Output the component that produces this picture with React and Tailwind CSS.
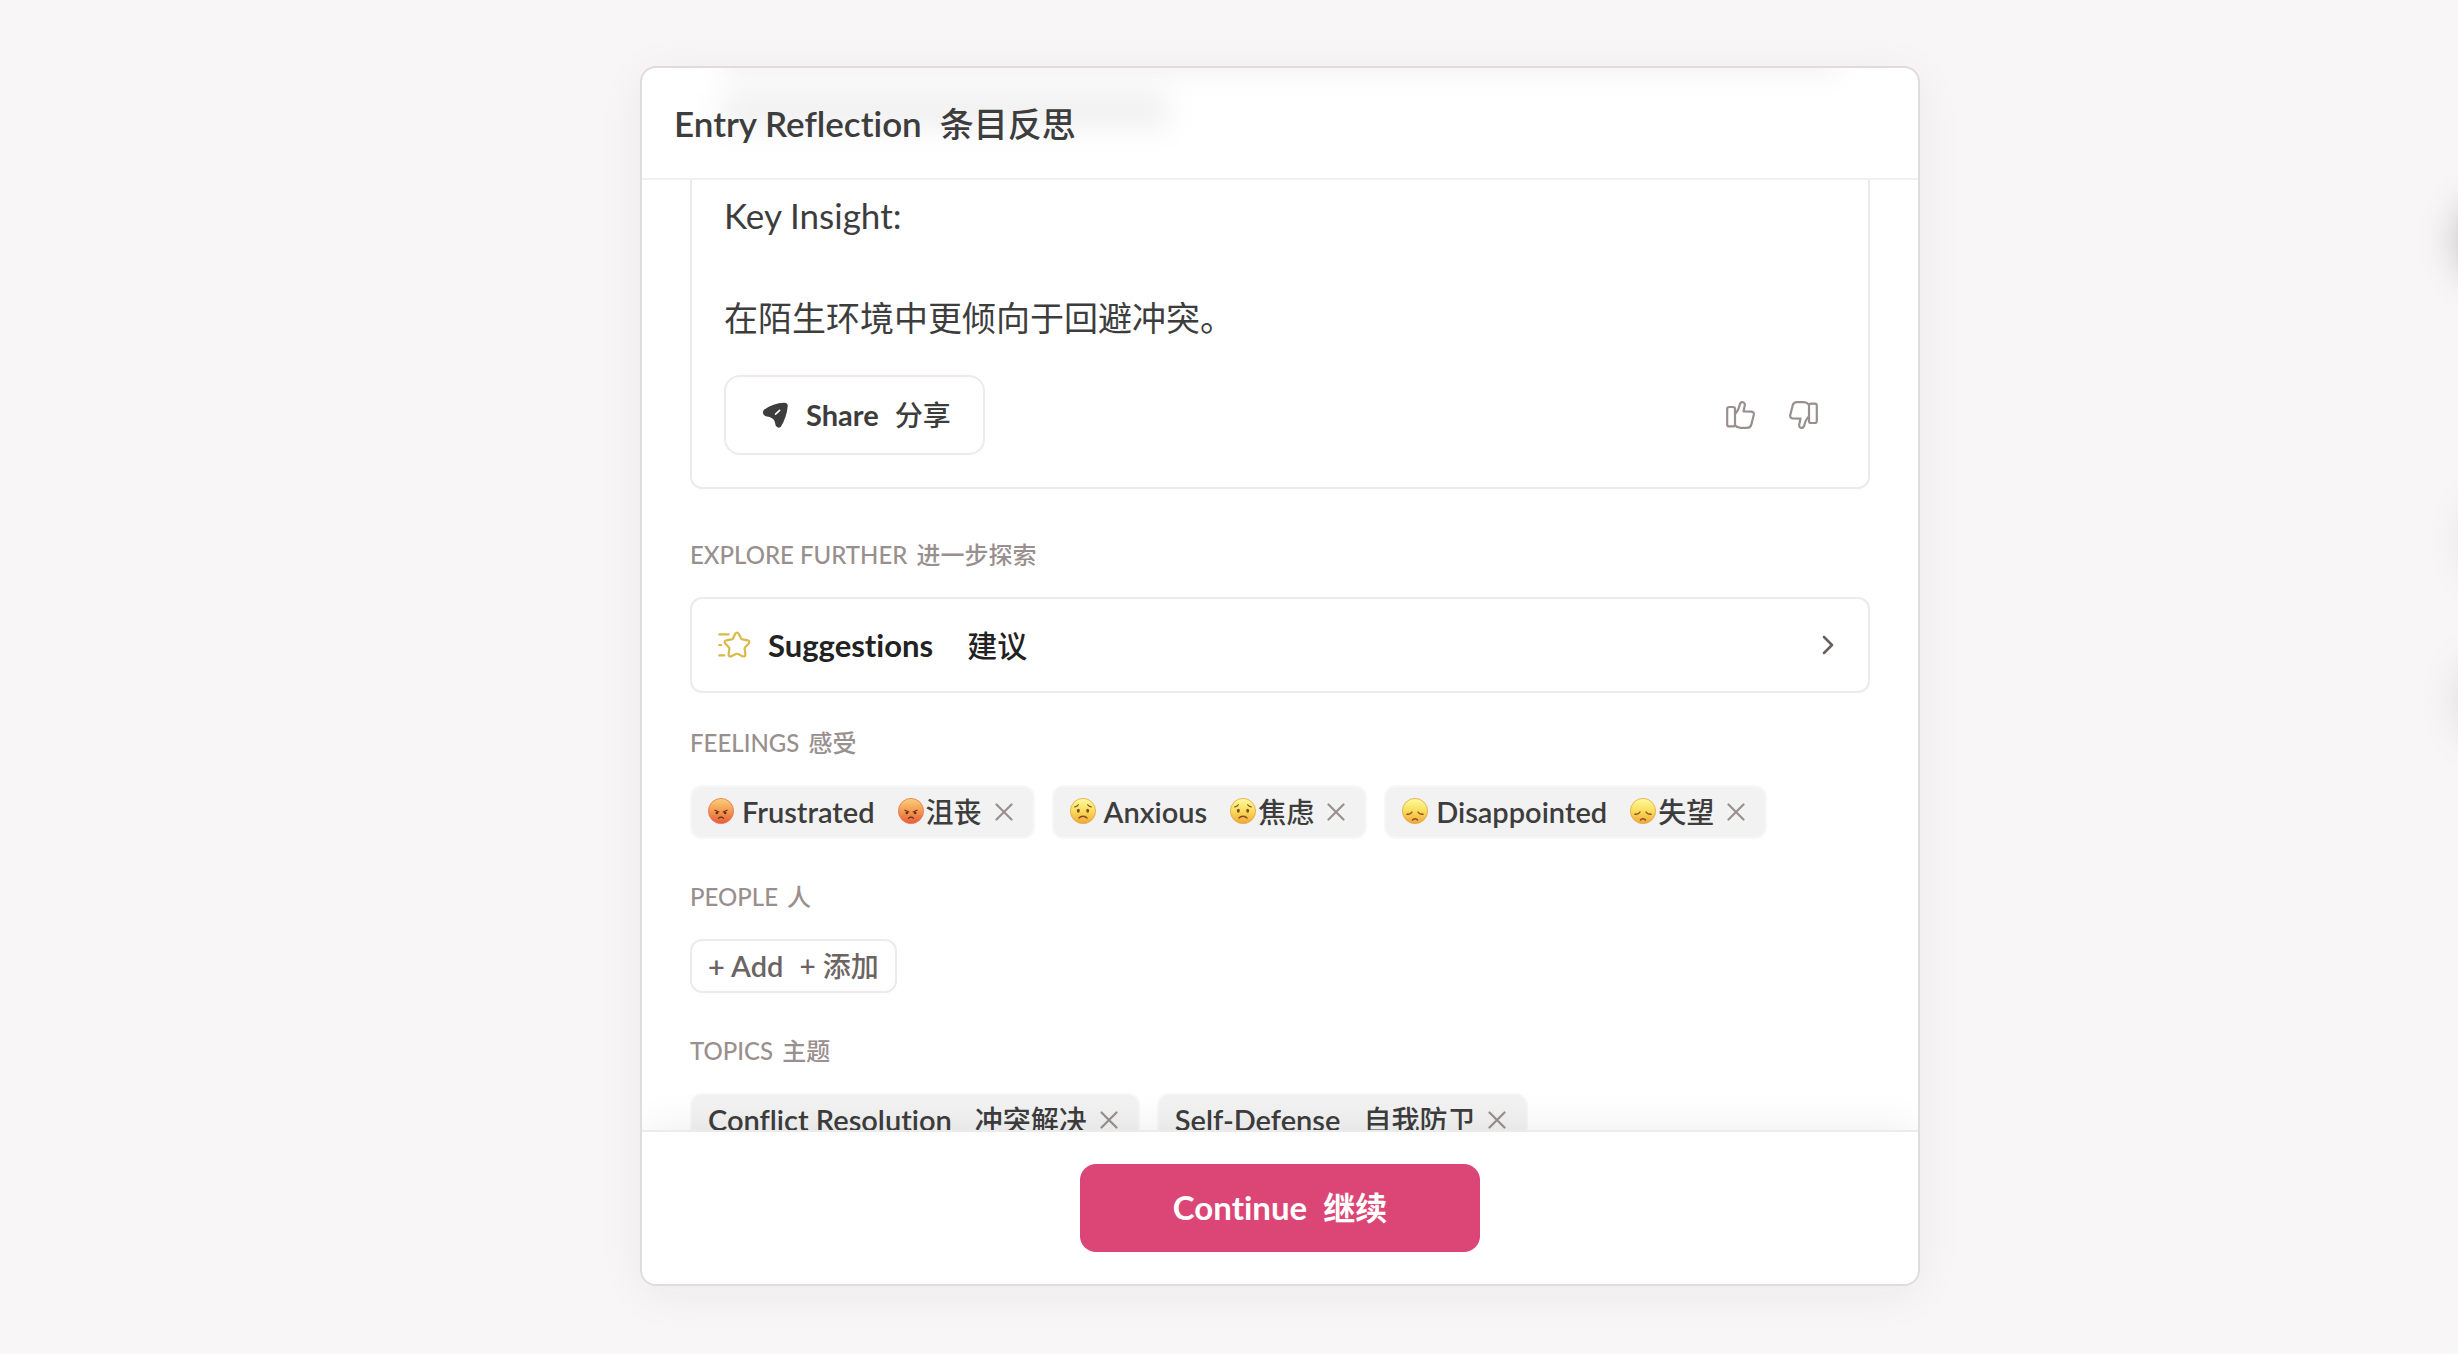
import { clsx } from "clsx";

const feelings = [
  { face: "angry", label: "Frustrated", translation: "沮丧" },
  { face: "worried", label: "Anxious", translation: "焦虑" },
  { face: "sad", label: "Disappointed", translation: "失望" },
];

const topics = [
  { label: "Conflict Resolution", translation: "冲突解决" },
  { label: "Self-Defense", translation: "自我防卫" },
];

function ShareIcon() {
  return (
    <svg className="size-[26px]" viewBox="0 0 26 26" fill="none" aria-hidden="true">
      <path
        fill="currentColor"
        d="M2.300 7.600C8 3.400 15 .9 22 .7q4-.1 3.700 3.600c-.6 7.500-3.200 14.700-6.700 20.100q-2.200 2.500-4.600.2c-1.600-1.900-.6-5.200-3.600-7.900-2.600-2.500-6.300-1-9-3.900Q-.2 9.900 2.300 7.600Z"
      />
      <path d="M13.600 12.200 17.600 8.400" stroke="#fff" strokeWidth="1.600" strokeLinecap="round" />
    </svg>
  );
}

function ThumbIcon({ down }) {
  return (
    <svg
      className={clsx("h-7 w-[29px]", down && "rotate-180")}
      viewBox="0 0 29 28"
      fill="none"
      stroke="currentColor"
      strokeWidth="2.200"
      strokeLinejoin="round"
      aria-hidden="true"
    >
      <rect x="1.200" y="6" width="7.800" height="19.400" rx="2" />
      <path d="M9 12.800c2.500-2.300 4-5.800 4.800-9.400C14.400 1.300 15.600.9 17 1.200c1.600.4 2 1.600 1.800 3l-1.300 6.200 8 .3c1.800.2 2.600 1.400 2.300 3.100L25.200 24c-.7 1.900-1.900 2.800-4 2.800h-6.700c-2.300 0-4.200-.9-5.500-2.500" />
    </svg>
  );
}

function ShootingStarIcon() {
  return (
    <svg
      className="h-7 w-[33px]"
      viewBox="0 0 33 28"
      fill="none"
      stroke="#dab84a"
      strokeWidth="2.200"
      strokeLinecap="round"
      strokeLinejoin="round"
      aria-hidden="true"
    >
      <path d="M1.200 3.300h9.600M1.200 14h2M1.200 24.400h5.100" />
      <path d="M17.400 2.600Q19 .4 20.600 2.600l2.300 4.600q.5 1 1.600 1.200l5.100.9q2.800.7 1.200 3.100l-3.600 3.800q-.7.800-.6 1.800l.8 5.200q.1 2.800-2.500 2.200L20.200 23Q19 22.500 17.800 23l-4.700 2.400q-2.600.6-2.500-2.200l.8-5.200q.1-1-.6-1.800l-3.600-3.800Q5.600 10 8.400 9.300l5.100-.9q1.100-.2 1.600-1.200Z" />
    </svg>
  );
}

function ChevronIcon() {
  return (
    <svg className="h-5 w-3" viewBox="0 0 12 20" fill="none" stroke="#6b6162" strokeWidth="2.600" strokeLinecap="round" strokeLinejoin="round" aria-hidden="true">
      <path d="m2 2 8 8-8 8" />
    </svg>
  );
}

function CloseIcon() {
  return (
    <svg className="size-[18px]" viewBox="0 0 18 18" fill="none" stroke="currentColor" strokeWidth="2.200" strokeLinecap="round" aria-hidden="true">
      <path d="m1.500 1.500 15 15M16.500 1.500l-15 15" />
    </svg>
  );
}

function Face({ type }) {
  return (
    <svg className="-mt-[2px] size-[26px] shrink-0" viewBox="0 0 26 26" fill="none" aria-hidden="true">
      <defs>
        <linearGradient id="face-red" x1="0" y1="0" x2="0" y2="1">
          <stop offset="0" stopColor="#fad07a" />
          <stop offset=".5" stopColor="#f39a52" />
          <stop offset="1" stopColor="#e65a3c" />
        </linearGradient>
        <linearGradient id="face-yellow" x1="0" y1="0" x2="0" y2="1">
          <stop offset="0" stopColor="#fffb9c" />
          <stop offset=".5" stopColor="#fbdc5c" />
          <stop offset="1" stopColor="#f0a53c" />
        </linearGradient>
      </defs>
      {type === "angry" && (
        <>
          <circle cx="13" cy="13" r="12.600" fill="url(#face-red)" stroke="#e8764a" strokeWidth=".8" />
          <g stroke="#6b2f17" strokeWidth="1.200" strokeLinecap="round">
            <path d="m7 12.200 3.800 1.800M19 12.200 15.200 14" />
            <path d="M10.500 20.300c1.400-1.600 3.600-1.600 5 0" />
          </g>
          <circle cx="8.800" cy="15" r="1.300" fill="#6b2f17" />
          <circle cx="17.200" cy="15" r="1.300" fill="#6b2f17" />
        </>
      )}
      {type === "worried" && (
        <>
          <circle cx="13" cy="13" r="12.600" fill="url(#face-yellow)" stroke="#e5a545" strokeWidth=".8" />
          <g stroke="#80501c" strokeWidth="1.200" strokeLinecap="round">
            <path d="M4.500 9c1.600-.3 3-1 3.800-2.300M21.500 9c-1.600-.3-3-1-3.800-2.300" />
            <path d="M9 20c2-2.400 6-2.400 8 0" strokeWidth="1.400" />
          </g>
          <ellipse cx="8.300" cy="12.800" rx="1.500" ry="2" fill="#80501c" />
          <ellipse cx="17.700" cy="12.800" rx="1.500" ry="2" fill="#80501c" />
        </>
      )}
      {type === "sad" && (
        <>
          <circle cx="13" cy="13" r="12.600" fill="url(#face-yellow)" stroke="#e5a545" strokeWidth=".8" />
          <g stroke="#80501c" strokeWidth="1.400" strokeLinecap="round">
            <path d="M5 16.200c2 .2 4-.6 5-2.200M21 16.200c-2 .2-4-.6-5-2.200" />
            <path d="M10.500 22c1.300-1.700 3.700-1.700 5 0" />
          </g>
        </>
      )}
    </svg>
  );
}

function SectionLabel({ children, translation, className }) {
  return (
    <h2 className={clsx("mb-6 flex items-center gap-[9px] text-[24px] leading-9 font-medium text-[#998f8e]", className)}>
      <span>{children}</span>
      <span>{translation}</span>
    </h2>
  );
}

function Chip({ face, label, translation }) {
  return (
    <li className="flex h-[54px] items-center rounded-xl border-2 border-[#f7f7f7] bg-[#f2f2f2] pr-5 pl-4 whitespace-nowrap text-[#3d3d3d]">
      <span className="flex items-center gap-2 text-[29px] font-semibold">
        {face && <Face type={face} />}
        {label}
      </span>
      <span className="ml-[23px] flex items-center gap-[2px] text-[28px] font-medium">
        {face && <Face type={face} />}
        {translation}
      </span>
      <button type="button" aria-label={`Remove ${label}`} className="ml-[13px] text-[#998f8e]">
        <CloseIcon />
      </button>
    </li>
  );
}

function EdgeShadows() {
  return (
    <div aria-hidden="true" className="pointer-events-none">
      <div className="absolute top-[208px] -right-[72px] size-16 rounded-full shadow-[0_0_44px_4px_rgba(0,0,0,0.32)]" />
      <div className="absolute top-[500px] -right-[76px] h-20 w-16 rounded-full shadow-[0_0_44px_4px_rgba(0,0,0,0.1)]" />
      <div className="absolute top-[668px] -right-[74px] size-16 rounded-full shadow-[0_0_48px_4px_rgba(0,0,0,0.18)]" />
    </div>
  );
}

export default function App() {
  return (
    <div className="relative flex h-screen justify-center overflow-hidden bg-[#f8f6f7] pt-[66px] pb-[68px] pl-[102px] font-['Lato','Noto_Sans_CJK_SC',sans-serif] text-[#3d3d3d] [font-variant-ligatures:no-common-ligatures]">
      <EdgeShadows />

      <main className="flex w-full max-w-[1280px] flex-col overflow-hidden rounded-2xl border-2 border-[#e2dbdd] bg-white shadow-[0_8px_48px_rgba(60,40,50,0.06)]">
        <header className="relative h-28 shrink-0 overflow-hidden border-b-2 border-[#f1f1f1] px-8">
          {/* text scrolled under the translucent header */}
          <div aria-hidden="true" className="absolute inset-x-20 -top-6 flex flex-col gap-5">
            <div className="h-7 w-full bg-black/6 blur-[14px]" />
            <div className="h-9 w-2/5 bg-black/6 blur-[14px]" />
          </div>
          <h1 className="relative flex h-full items-center gap-[18px] text-[35px] font-semibold">
            <span>Entry Reflection</span>
            <span className="text-[34px] font-medium">条目反思</span>
          </h1>
        </header>

        <div className="min-h-0 flex-1 overflow-hidden px-12">
          <section className="rounded-b-xl border-x-2 border-b-2 border-[#ebebeb] px-8 pt-[10px] pb-8">
            <p className="text-[35px] leading-[51px]">Key Insight:</p>
            <p className="mt-[51px] text-[34px] leading-[51px]">在陌生环境中更倾向于回避冲突。</p>
            <div className="mt-8 flex items-center justify-between">
              <button type="button" className="flex h-20 items-center rounded-2xl border-2 border-[#efe9ea] pr-8 pl-9 font-bold">
                <ShareIcon />
                <span className="ml-[18px] text-[29px]">Share</span>
                <span className="ml-4 text-[28px] font-medium">分享</span>
              </button>
              <div className="flex text-[#998f8e]">
                <button type="button" aria-label="Helpful" className="p-[18px] pr-4">
                  <ThumbIcon />
                </button>
                <button type="button" aria-label="Not helpful" className="p-[18px]">
                  <ThumbIcon down />
                </button>
              </div>
            </div>
          </section>

          <SectionLabel className="mt-12" translation="进一步探索">EXPLORE FURTHER</SectionLabel>
          <button type="button" className="flex h-24 w-full items-center rounded-xl border-2 border-[#ebebeb] pr-[34px] pl-[26px] font-bold text-[#222222]">
            <ShootingStarIcon />
            <span className="ml-[17px] text-[31px]">Suggestions</span>
            <span className="ml-[34px] flex-1 text-left text-[30px] font-medium">建议</span>
            <ChevronIcon />
          </button>

          <SectionLabel className="mt-8" translation="感受">FEELINGS</SectionLabel>
          <ul className="flex gap-[17px]">
            {feelings.map((feeling) => (
              <Chip key={feeling.label} {...feeling} />
            ))}
          </ul>

          <SectionLabel className="mt-10" translation="人">PEOPLE</SectionLabel>
          <button type="button" className="flex h-[54px] items-center gap-4 rounded-xl border-2 border-[#efe9ea] px-4 text-[#6b6463]">
            <span className="text-[29px] font-semibold">+ Add</span>
            <span className="text-[28px] font-medium">+ 添加</span>
          </button>

          <SectionLabel className="mt-10" translation="主题">TOPICS</SectionLabel>
          <ul className="flex gap-[17px]">
            {topics.map((topic) => (
              <Chip key={topic.label} {...topic} />
            ))}
          </ul>
        </div>

        <footer className="relative flex shrink-0 justify-center border-t-2 border-[#ebebeb] bg-white py-8 shadow-[0_0_40px_rgba(0,0,0,0.08)]">
          <button type="button" className="flex h-[88px] w-[400px] items-center justify-center gap-4 rounded-2xl bg-[#db4676] text-[33px] font-bold text-white">
            <span>Continue</span>
            <span className="text-[32px] font-semibold">继续</span>
          </button>
        </footer>
      </main>
    </div>
  );
}
